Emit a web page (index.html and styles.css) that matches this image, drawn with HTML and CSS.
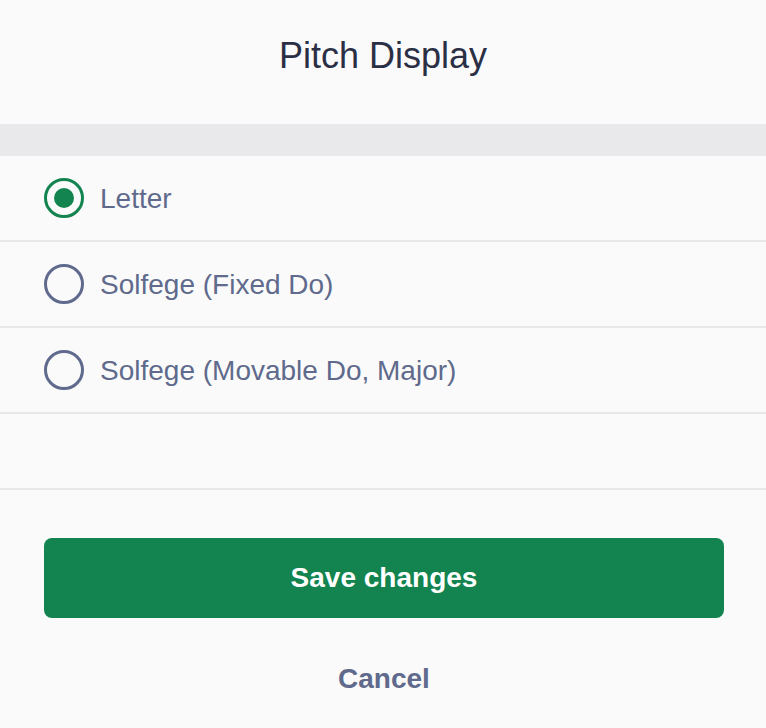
FILE: index.html
```html
<!DOCTYPE html>
<html>
<head>
<meta charset="utf-8">
<link rel="stylesheet" href="styles.css">
</head>
<body>
<div class="sheet">
  <header class="title-bar">
    <h1 class="title">Pitch Display</h1>
  </header>
  <div class="band"></div>
  <ul class="options">
    <li class="option">
      <span class="radio checked"><span class="dot"></span></span>
      <span class="label">Letter</span>
    </li>
    <li class="option">
      <span class="radio"></span>
      <span class="label">Solfege (Fixed Do)</span>
    </li>
    <li class="option">
      <span class="radio"></span>
      <span class="label">Solfege (Movable Do, Major)</span>
    </li>
    <li class="option empty"></li>
  </ul>
  <div class="actions">
    <button class="save">Save changes</button>
    <button class="cancel">Cancel</button>
  </div>
</div>
</body>
</html>
```

FILE: styles.css
```css
* { box-sizing: border-box; }
html, body {
  margin: 0;
  padding: 0;
  background: #fafafa;
}
body {
  font-family: "Liberation Sans", Arial, Helvetica, sans-serif;
  width: 766px;
  height: 728px;
  overflow: hidden;
}
.sheet {
  display: flex;
  flex-direction: column;
}
.title-bar {
  height: 124px;
  display: flex;
  justify-content: center;
  padding-top: 35px;
}
.title {
  margin: 0;
  font-size: 36px;
  font-weight: 400;
  line-height: 42px;
  color: #2b2f45;
}
.band {
  height: 32px;
  background: #e9e9eb;
}
.options {
  list-style: none;
  margin: 0;
  padding: 0;
}
.option {
  height: 86px;
  border-bottom: 2px solid #e8e8e8;
  display: flex;
  align-items: center;
  gap: 16px;
  padding-left: 44px;
}
.option.empty {
  height: 76px;
}
.radio {
  width: 40px;
  height: 40px;
  border-radius: 50%;
  border: 3.5px solid #5f6a8c;
  display: flex;
  align-items: center;
  justify-content: center;
  flex: none;
}
.radio.checked {
  border-color: #13844f;
}
.dot {
  width: 20px;
  height: 20px;
  border-radius: 50%;
  background: #13844f;
}
.label {
  font-size: 28px;
  color: #5f6a8c;
  line-height: 32px;
  padding-top: 2px;
}
.actions {
  display: flex;
  flex-direction: column;
  align-items: center;
  padding: 48px 42px 0 44px;
}
.save {
  width: 680px;
  height: 80px;
  border: none;
  border-radius: 8px;
  background: #13844f;
  color: #ffffff;
  font-family: "Liberation Sans", Arial, Helvetica, sans-serif;
  font-size: 28px;
  font-weight: 700;
}
.cancel {
  margin-top: 41px;
  border: none;
  background: none;
  padding: 0;
  font-family: "Liberation Sans", Arial, Helvetica, sans-serif;
  font-size: 28px;
  font-weight: 700;
  color: #5f6a8c;
  line-height: 40px;
}
```
